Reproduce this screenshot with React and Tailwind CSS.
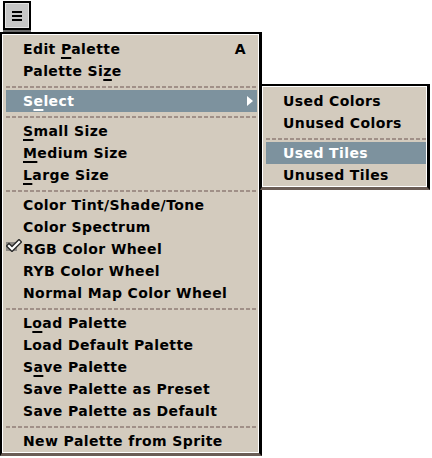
import React from "react";

// Aseprite-style palette options menu
const FONT = { fontFamily: '"DejaVu Sans", "Liberation Sans", sans-serif' };

function Sep() {
  return (
    <div className="h-[8px] pt-[4px]">
      <div className="h-[2px] bg-[repeating-linear-gradient(90deg,#a09088_0_4px,transparent_4px_6px)]" />
    </div>
  );
}

function Item({ label, u, shortcut, sub, active, checked }) {
  // u = index of the mnemonic letter
  const text =
    u === undefined ? (
      label
    ) : (
      <>
        {label.slice(0, u)}
        <span className="underline decoration-2 underline-offset-[3px]">{label[u]}</span>
        {label.slice(u + 1)}
      </>
    );
  return (
    <div
      className={`relative h-[22px] flex items-center pl-[17px] pr-[11px] ${
        active ? "bg-[#7d929e] text-white" : "text-black"
      }`}
    >
      {checked && (
        <svg className="absolute left-0 top-[1px]" width="16" height="13" viewBox="0 0 16 13">
          <rect x="0" y="3" width="11" height="9" fill="#8e8a86" />
          <path d="M3 7 L6 10 L13 3" fill="none" stroke="#2b2b2b" strokeWidth="5" strokeLinecap="square" />
          <path d="M3 7 L6 10 L13 3" fill="none" stroke="#ffffff" strokeWidth="2.2" strokeLinecap="square" />
        </svg>
      )}
      <span className="flex-1 whitespace-nowrap">{text}</span>
      {shortcut && <span>{shortcut}</span>}
      {sub && (
        <svg className="absolute right-[4px] top-[6px]" width="6" height="10" viewBox="0 0 6 10">
          <polygon points="0,0 6,5 0,10" fill="#ffffff" />
        </svg>
      )}
    </div>
  );
}

export default function App() {
  return (
    <div
      className="relative w-[432px] h-[458px] bg-white text-[14px] font-bold leading-none tracking-[0.4px]"
      style={FONT}
    >
      {/* Botó del menú */}
      <div className="pl-[3px] pt-[1px]">
        <div className="w-[28px] h-[29px] border-2 border-black shadow-[0_2px_0_#6b6b6b]">
          <div className="h-full border border-[#e4e4e4] bg-[#c6c6c6] flex flex-col items-center justify-center gap-[2px]">
            <div className="w-[10px] h-[2px] bg-black" />
            <div className="w-[10px] h-[2px] bg-black" />
            <div className="w-[10px] h-[2px] bg-black" />
          </div>
        </div>
      </div>

      {/* Menú principal */}
      <div className="absolute left-0 top-[32px] w-[262px] border-t-2 border-l-2 border-r-[3px] border-black border-b-[3px] border-b-[#6b5d56]">
        <div className="border border-white bg-[#d3cbbe] pt-[3px] pl-[3px] pr-[1px]">
          <Item label="Edit Palette" u={5} shortcut="A" />
          <Item label="Palette Size" u={10} />
          <Sep />
          <Item label="Select" u={1} sub active />
          <Sep />
          <Item label="Small Size" u={0} />
          <Item label="Medium Size" u={0} />
          <Item label="Large Size" u={0} />
          <Sep />
          <Item label="Color Tint/Shade/Tone" />
          <Item label="Color Spectrum" />
          <Item label="RGB Color Wheel" checked />
          <Item label="RYB Color Wheel" />
          <Item label="Normal Map Color Wheel" />
          <Sep />
          <Item label="Load Palette" u={1} />
          <Item label="Load Default Palette" />
          <Item label="Save Palette" u={1} />
          <Item label="Save Palette as Preset" />
          <Item label="Save Palette as Default" />
          <Sep />
          <Item label="New Palette from Sprite" />
        </div>
      </div>

      {/* Submenú Select */}
      <div className="absolute left-[260px] top-[84px] w-[170px] border-t-2 border-l-2 border-r-[3px] border-black border-b-[3px] border-b-[#6b5d56]">
        <div className="border border-white bg-[#d3cbbe] pt-[3px] pl-[3px]">
          <Item label="Used Colors" />
          <Item label="Unused Colors" />
          <Sep />
          <Item label="Used Tiles" active />
          <Item label="Unused Tiles" />
        </div>
      </div>
    </div>
  );
}
